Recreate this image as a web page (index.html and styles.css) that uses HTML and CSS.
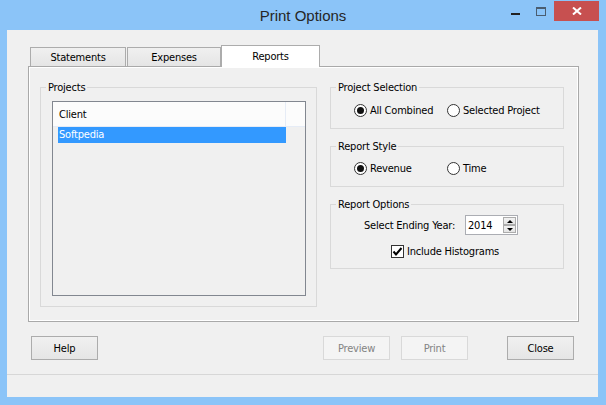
FILE: index.html
```html
<!DOCTYPE html>
<html lang="en">

<head>
    <meta charset="UTF-8">
    <title>Print Options</title>
    <link rel="stylesheet" href="styles.css">
</head>

<body>
    <div class="window">
        <div class="titlebar">
            <div></div>
            <div class="title">Print Options</div>
            <div class="caption">
                <span class="cap-btn cap-min"></span>
                <span class="cap-btn cap-max"></span>
                <span class="cap-btn cap-close">
                    <svg width="10" height="8" viewBox="0 0 10 8">
                        <path d="M1 0.5 L9 7.5 M9 0.5 L1 7.5" stroke="#fff" stroke-width="2" fill="none" />
                    </svg>
                </span>
            </div>
        </div>

        <div class="client">
            <div class="tabs">
                <div class="tab tab-statements">Statements</div>
                <div class="tab tab-expenses">Expenses</div>
                <div class="tab tab-reports active">Reports</div>
            </div>

            <div class="panel">
                <fieldset class="group projects">
                    <legend>Projects</legend>
                    <div class="listbox">
                        <div class="list-head"><span class="col">Client</span></div>
                        <div class="list-item selected">Softpedia</div>
                    </div>
                </fieldset>

                <div class="right">
                    <fieldset class="group">
                        <legend>Project Selection</legend>
                        <div class="radio-row first">
                            <div class="option"><span class="radio on"></span>All Combined</div>
                            <div class="option"><span class="radio"></span>Selected Project</div>
                        </div>
                    </fieldset>

                    <fieldset class="group">
                        <legend>Report Style</legend>
                        <div class="radio-row">
                            <div class="option"><span class="radio on"></span>Revenue</div>
                            <div class="option"><span class="radio"></span>Time</div>
                        </div>
                    </fieldset>

                    <fieldset class="group">
                        <legend>Report Options</legend>
                        <div class="spin-row">
                            <span class="spin-label">Select Ending Year:</span>
                            <div class="spin">
                                <span class="spin-value">2014</span>
                                <span class="spin-arrows">
                                    <span class="arrow up"></span>
                                    <span class="arrow down"></span>
                                </span>
                            </div>
                        </div>
                        <div class="check-row">
                            <span class="checkbox">
                                <svg width="11" height="11" viewBox="0 0 11 11">
                                    <path d="M1.5 5.5 L4 8.5 L9.5 2" fill="none" stroke="#000" stroke-width="2" />
                                </svg>
                            </span>
                            Include Histograms
                        </div>
                    </fieldset>
                </div>
            </div>

            <div class="buttons">
                <div class="btn">Help</div>
                <div class="spacer"></div>
                <div class="btn disabled">Preview</div>
                <div class="btn disabled btn-print">Print</div>
                <div class="btn btn-close">Close</div>
            </div>

            <div class="statusbar"></div>
        </div>
    </div>
</body>

</html>
```

FILE: styles.css
```css
body {
    margin: 0;
    font-family: "DejaVu Sans Condensed", "DejaVu Sans", sans-serif;
    font-stretch: condensed;
    font-size: 11px;
    letter-spacing: -0.2px;
    color: #000;
}

.window {
    width: 606px;
    height: 405px;
    background-color: #8bc4f8;
    display: flex;
    flex-direction: column;
}

/* title bar */
.titlebar {
    height: 30px;
    flex-shrink: 0;
    display: grid;
    grid-template-columns: 1fr auto 1fr;
}

.title {
    font-family: "Liberation Sans", Arial, sans-serif;
    font-stretch: normal;
    font-size: 15px;
    letter-spacing: 0;
    line-height: 32px;
    height: 30px;
    color: #262626;
}

.caption {
    display: flex;
    justify-content: flex-end;
    align-items: flex-start;
    padding: 1px 7px 0 0;
}

.cap-btn {
    width: 26px;
    height: 20px;
    display: flex;
    justify-content: center;
}

.cap-min::before {
    content: "";
    width: 9px;
    height: 2px;
    margin-top: 12px;
    background-color: #222;
}

.cap-max::before {
    content: "";
    width: 8px;
    height: 6px;
    margin-top: 6px;
    border: 1px solid #4a5d70;
    border-top-width: 2px;
}

.cap-close {
    width: 45px;
    align-items: center;
    background-color: #c75050;
}

/* client area */
.client {
    flex: 1;
    margin: 0 8px 8px 7px;
    padding-top: 15px;
    background-color: #f0f0f0;
    display: flex;
    flex-direction: column;
}

.tabs {
    display: flex;
    height: 22px;
    margin-left: 23px;
    margin-bottom: -1px;
    position: relative;
    z-index: 1;
}

.tab {
    height: 19px;
    margin-top: 2px;
    box-sizing: border-box;
    border: 1px solid #acacac;
    border-bottom: none;
    background: linear-gradient(#f0f0f0, #e5e5e5);
    display: flex;
    align-items: center;
    justify-content: center;
}

.tab-statements {
    width: 96px;
    margin-right: 1px;
}

.tab-expenses {
    width: 94px;
}

.tab.active {
    width: 99px;
    height: 22px;
    margin-top: 0;
    padding-bottom: 1px;
    background: #fff;
}

.panel {
    margin-left: 21px;
    width: 551px;
    height: 256px;
    box-sizing: border-box;
    border: 1px solid #a9a9a9;
    box-shadow: inset 0 0 0 1px #fff;
    padding: 14px 0 0 11px;
    display: flex;
    align-items: flex-start;
}

.group {
    margin: 0;
    padding: 0;
    min-width: 0;
    border: 1px solid #d9d9d9;
}

.group legend {
    margin-left: 5px;
    padding: 0 2px;
    line-height: 13px;
}

.projects {
    width: 277px;
    height: 226px;
    box-sizing: border-box;
}

.listbox {
    margin: 7px 0 0 11px;
    width: 254px;
    height: 195px;
    box-sizing: border-box;
    border: 1px solid #828790;
    background-color: #f0f0f0;
}

.list-head {
    display: flex;
    height: 25px;
    box-sizing: border-box;
    background-color: #fcfcfc;
    border-bottom: 1px solid #e6ecf6;
}

.list-head .col {
    width: 233px;
    box-sizing: border-box;
    padding-left: 6px;
    border-right: 1px solid #e6ecf6;
    display: flex;
    align-items: center;
}

.list-item {
    margin-left: 5px;
    width: 228px;
    height: 16px;
    line-height: 16px;
    padding-left: 1px;
    box-sizing: border-box;
}

.list-item.selected {
    background-color: #3399ff;
    color: #fff;
}

.right {
    margin-left: 13px;
    width: 234px;
    display: flex;
    flex-direction: column;
    gap: 11px;
}

.radio-row {
    display: grid;
    grid-template-columns: 93px auto;
    padding-left: 23px;
    margin: 9px 0 11px;
}

.radio-row.first {
    margin-top: 10px;
}

.option {
    display: flex;
    align-items: center;
    gap: 3px;
    height: 13px;
}

.radio {
    width: 13px;
    height: 13px;
    box-sizing: border-box;
    border: 1px solid #333;
    border-radius: 50%;
    background-color: #fff;
    display: flex;
    align-items: center;
    justify-content: center;
}

.radio.on::after {
    content: "";
    width: 7px;
    height: 7px;
    border-radius: 50%;
    background-color: #111;
}

.spin-row {
    display: flex;
    align-items: center;
    gap: 8px;
    padding-left: 33px;
    margin-top: 4px;
}

.spin-label {
    width: 93px;
    white-space: nowrap;
}

.spin {
    width: 53px;
    height: 20px;
    box-sizing: border-box;
    border: 1px solid #abadb3;
    background-color: #fff;
    padding: 1px 1px 0 2px;
    display: flex;
}

.spin-value {
    flex: 1;
    align-self: center;
}

.spin-arrows {
    width: 13px;
    display: flex;
    flex-direction: column;
}

.arrow {
    height: 8px;
    box-sizing: border-box;
    border: 1px solid #acacac;
    background: linear-gradient(#f2f2f2, #e4e4e4);
    display: flex;
    align-items: center;
    justify-content: center;
}

.arrow.up::before {
    content: "";
    border-left: 3px solid transparent;
    border-right: 3px solid transparent;
    border-bottom: 3px solid #000;
}

.arrow.down::before {
    content: "";
    border-left: 3px solid transparent;
    border-right: 3px solid transparent;
    border-top: 3px solid #000;
}

.check-row {
    display: flex;
    align-items: center;
    gap: 3px;
    padding-left: 60px;
    margin: 10px 0;
}

.checkbox {
    width: 13px;
    height: 13px;
    box-sizing: border-box;
    border: 1px solid #333;
    background-color: #fff;
    display: flex;
    align-items: center;
    justify-content: center;
}

/* bottom buttons */
.buttons {
    display: flex;
    margin-top: 14px;
    padding: 0 24px;
}

.spacer {
    flex: 1;
}

.btn {
    width: 67px;
    height: 24px;
    box-sizing: border-box;
    border: 1px solid #acacac;
    background: linear-gradient(#f0f0f0, #e5e5e5);
    display: flex;
    align-items: center;
    justify-content: center;
}

.btn.disabled {
    border-color: #d9d9d9;
    background: #f4f4f4;
    color: #838383;
}

.btn-print {
    margin-left: 11px;
}

.btn-close {
    margin-left: 39px;
}

.statusbar {
    margin-top: auto;
    height: 22px;
    border-top: 1px solid #d7d7d7;
}
```
